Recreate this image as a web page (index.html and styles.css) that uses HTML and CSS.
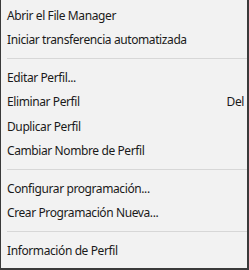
FILE: index.html
```html
<!DOCTYPE html>
<html>
<head>
<meta charset="utf-8">
<link rel="stylesheet" href="styles.css">
</head>
<body>
<div class="menu">
  <div class="item"><span>Abrir el File Manager</span></div>
  <div class="item"><span>Iniciar transferencia automatizada</span></div>
  <div class="sep"></div>
  <div class="item"><span>Editar Perfil...</span></div>
  <div class="item"><span>Eliminar Perfil</span><span class="key">Del</span></div>
  <div class="item"><span>Duplicar Perfil</span></div>
  <div class="item"><span>Cambiar Nombre de Perfil</span></div>
  <div class="sep"></div>
  <div class="item"><span>Configurar programación...</span></div>
  <div class="item"><span>Crear Programación Nueva...</span></div>
  <div class="sep"></div>
  <div class="item"><span>Información de Perfil</span></div>
</div>
</body>
</html>
```
FILE: styles.css
```css
html, body {
  margin: 0;
  padding: 0;
  background: #f2f2f2;
}
.menu {
  width: 249px;
  height: 270px;
  box-sizing: border-box;
  background: #f2f2f2;
  border-left: 1px solid #3a3a3a;
  border-right: 2px solid #3a3a3a;
  border-bottom: 2px solid #3a3a3a;
  padding-top: 3px;
  font-family: "Noto Sans", "Open Sans", sans-serif;
  font-size: 12px;
  letter-spacing: -0.4px;
  color: #1a1a1a;
}
.item {
  height: 24.5px;
  display: flex;
  align-items: center;
  justify-content: space-between;
  padding: 0 3px 0 6px;
  white-space: nowrap;
}
.sep {
  height: 1px;
  background: #d7d7d7;
  margin: 6px 0 6px 6px;
}
```
